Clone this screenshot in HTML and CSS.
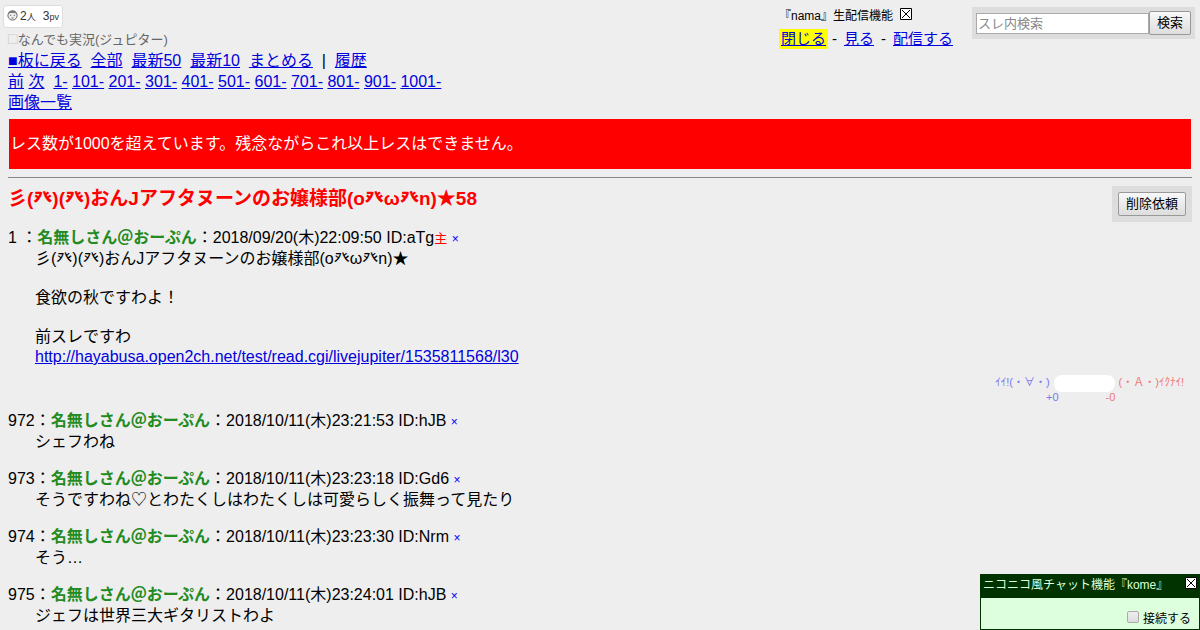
FILE: index.html
```html
<!DOCTYPE html>
<html lang="ja">
<head>
<meta charset="utf-8">
<title>彡(癶)(癶)おんJアフタヌーンのお嬢様部(o癶ω癶n)★58</title>
<link rel="stylesheet" href="styles.css">
</head>
<body>
<header class="top">
  <div class="top-main">
    <div class="counter">
      <svg class="face" viewBox="0 0 11 11" aria-hidden="true"><circle cx="5.5" cy="5.5" r="4.6" fill="#eee" stroke="#666"/><path d="M1 4.5C1 2 3 .6 5.5 .6S10 2 10 4.5L8 3H3z" fill="#777"/><path d="M3 5.3h1.2M6.8 5.3H8M4.5 8h2" stroke="#666" fill="none"/></svg>
      <span>2<small>人</small></span>
      <span class="views">3<small>pv</small></span>
    </div>
    <div class="board"><span class="board-mark">□</span>なんでも実況(ジュピター)</div>
    <nav class="nav">
      <div class="nav-row"><a href="#">■板に戻る</a>&nbsp; <a href="#">全部</a>&nbsp; <a href="#">最新50</a>&nbsp; <a href="#">最新10</a>&nbsp; <a href="#">まとめる</a>&nbsp; |&nbsp; <a href="#">履歴</a></div>
      <div class="nav-row"><a href="#">前</a> <a href="#">次</a>&nbsp; <a href="#">1-</a> <a href="#">101-</a> <a href="#">201-</a> <a href="#">301-</a> <a href="#">401-</a> <a href="#">501-</a> <a href="#">601-</a> <a href="#">701-</a> <a href="#">801-</a> <a href="#">901-</a> <a href="#">1001-</a></div>
      <div class="nav-row"><a href="#">画像一覧</a></div>
    </nav>
  </div>
  <section class="nama">
    <div class="nama-title">『nama』生配信機能
      <button class="close" type="button" aria-label="閉じる"><svg viewBox="0 0 12 12"><path d="M.5.5h11v11H.5z" fill="#fff" stroke="#000"/><path d="M2 2l8 8M10 2l-8 8" stroke="#000"/></svg></button>
    </div>
    <div class="nama-links"><a class="active" href="#">閉じる</a><span>-</span><a href="#">見る</a><span>-</span><a href="#">配信する</a></div>
  </section>
  <form class="search">
    <input class="search-input" type="text" placeholder="スレ内検索" aria-label="スレ内検索">
    <button class="btn search-btn" type="button">検索</button>
  </form>
</header>

<div class="banner">レス数が1000を超えています。残念ながらこれ以上レスはできません。</div>
<hr class="rule">

<main>
  <div class="title-row">
    <h1 class="title">彡(癶)(癶)おんJアフタヌーンのお嬢様部(o癶ω癶n)★58</h1>
    <div class="delete-box"><button class="btn" type="button">削除依頼</button></div>
  </div>

  <article class="post">
    <div class="post-head">1 ：<b class="name">名無しさん＠おーぷん</b>：2018/09/20(木)22:09:50 ID:aTg<span class="owner">主</span> <a class="ng" href="#">×</a></div>
    <div class="post-body first">
      <p>彡(癶)(癶)おんJアフタヌーンのお嬢様部(o癶ω癶n)★</p>
      <p>食欲の秋ですわよ！</p>
      <p>前スレですわ<br><a href="#">http://hayabusa.open2ch.net/test/read.cgi/livejupiter/1535811568/l30</a></p>
    </div>
    <div class="rating">
      <div class="good">ｲｲ!(・∀・)<div class="score">+0</div></div>
      <div class="gauge"></div>
      <div class="bad">(・Ａ・)ｲｸﾅｲ!<div class="score">-0</div></div>
    </div>
  </article>

  <article class="post">
    <div class="post-head">972：<b class="name">名無しさん＠おーぷん</b>：2018/10/11(木)23:21:53 ID:hJB <a class="ng" href="#">×</a></div>
    <div class="post-body">シェフわね</div>
  </article>
  <article class="post">
    <div class="post-head">973：<b class="name">名無しさん＠おーぷん</b>：2018/10/11(木)23:23:18 ID:Gd6 <a class="ng" href="#">×</a></div>
    <div class="post-body">そうですわね♡とわたくしはわたくしは可愛らしく振舞って見たり</div>
  </article>
  <article class="post">
    <div class="post-head">974：<b class="name">名無しさん＠おーぷん</b>：2018/10/11(木)23:23:30 ID:Nrm <a class="ng" href="#">×</a></div>
    <div class="post-body">そう…</div>
  </article>
  <article class="post">
    <div class="post-head">975：<b class="name">名無しさん＠おーぷん</b>：2018/10/11(木)23:24:01 ID:hJB <a class="ng" href="#">×</a></div>
    <div class="post-body">ジェフは世界三大ギタリストわよ</div>
  </article>
</main>

<aside class="chat">
  <div class="chat-title"><span>ニコニコ風チャット機能『kome』</span>
    <button class="close" type="button" aria-label="閉じる"><svg viewBox="0 0 12 12"><path d="M.5.5h11v11H.5z" fill="#fff" stroke="#000"/><path d="M2 2l8 8M10 2l-8 8" stroke="#000"/></svg></button>
  </div>
  <div class="chat-body"><input class="check" type="checkbox" id="connect"><label for="connect">接続する</label></div>
</aside>
</body>
</html>
```
FILE: styles.css
```css
* { box-sizing: border-box; }
html { overflow: hidden; }
body {
  margin: 0;
  padding: 0 8px;
  background: #eee;
  color: #000;
  font: 16px/21px "Liberation Sans", "Noto Sans CJK JP", sans-serif;
}
a { color: #0000dd; }
button, input { font-family: inherit; }

.top { display: flex; align-items: flex-start; margin-right: -3px; }
.top-main { flex: 1; padding-top: 5px; }
.counter {
  display: flex;
  align-items: center;
  width: max-content;
  height: 23px;
  margin-left: -5px;
  padding: 0 3px;
  background: #fff;
  border: 1px solid #ddd;
  border-radius: 3px;
  color: #333;
  font-size: 12px;
}
.counter small { font-size: 9px; }
.face { width: 11px; height: 11px; margin: 0 2px 2px 0; }
.views { margin-left: 7px; }
.board { margin-top: 2px; color: #666; font-size: 13px; line-height: 20px; }
.board-mark { color: #ccc; font-size: 16px; line-height: 0; }

.nama { width: 193px; padding-top: 6px; }
.nama-title { display: flex; align-items: center; gap: 7px; font-size: 12px; }
.close { width: 12px; height: 12px; padding: 0; border: 0; background: none; }
.close svg { display: block; width: 100%; height: 100%; }
.nama-title .close { margin-bottom: 6px; }
.nama-links { display: flex; gap: 7px; margin-top: 2px; font-size: 15px; line-height: 20px; }
.active { padding: 0 2px; background: #ff0; }
.nama-links .active { margin-right: -3px; }

.search {
  display: flex;
  align-items: center;
  width: 223px;
  height: 32px;
  margin-top: 7px;
  padding: 4px;
  background: #ddd;
}
.search-input {
  flex: 1;
  min-width: 0;
  height: 21px;
  padding: 0 1px;
  border: 1px solid #aaa;
  background: #fff;
  font-size: 13px;
}
.search-input::placeholder { color: #888; }
.btn {
  height: 24px;
  padding: 0 7px;
  border: 1px solid #999;
  border-radius: 2px;
  background: linear-gradient(#f8f8f8, #ddd);
  color: #000;
  font-size: 13px;
  line-height: 20px;
}

.banner { margin: 6px 1px 0; padding: 14px 1px 15px; background: #f00; color: #fff; }
.rule { margin: 8px 0 0; border: 0; border-top: 1px solid #888; }

.title-row { display: flex; justify-content: space-between; align-items: flex-start; height: 49px; padding-top: 8px; }
.title { margin: 0; color: #f00; font-size: 19px; line-height: 26px; }
.delete-box { padding: 6px; background: #ddd; line-height: 0; }

.post { margin-bottom: 16px; }
.name { color: #228b22; line-height: 1; }
.owner { color: #f00; font-size: 13px; line-height: 1; }
.ng { color: #00f; font-size: 12px; line-height: 1; text-decoration: none; }
.post-body { margin-left: 27px; }
.first { padding-top: 1px; line-height: 20px; }
.first p { margin: 0 0 19px; }
.first p:last-child { margin-bottom: 8px; }

.rating { display: flex; justify-content: flex-end; gap: 4px; margin: 0 8px -11px 0; font-size: 11px; line-height: 15px; }
.good { color: #77e; }
.good .score { margin-right: -9px; text-align: right; }
.bad { color: #e77; }
.bad .score { margin-left: -13px; }
.gauge { width: 61px; height: 17px; border-radius: 8px; background: #fff; }

.chat { position: fixed; right: 0; bottom: 0; width: 220px; border: 1px solid #030; background: #dfd; font-size: 12px; }
.chat-title { display: flex; justify-content: space-between; height: 23px; padding: 0 2px; background: #030; color: #dfd; }
.chat-title .close { margin-top: 2px; }
.chat-body { display: flex; align-items: center; justify-content: flex-end; gap: 4px; padding: 11px 8px 0 0; line-height: 20px; }
.check {
  appearance: none;
  width: 12px;
  height: 12px;
  margin: 0 0 5px;
  border: 1px solid #aaa;
  border-radius: 2px;
  background: linear-gradient(#eee, #ddd);
}
```
